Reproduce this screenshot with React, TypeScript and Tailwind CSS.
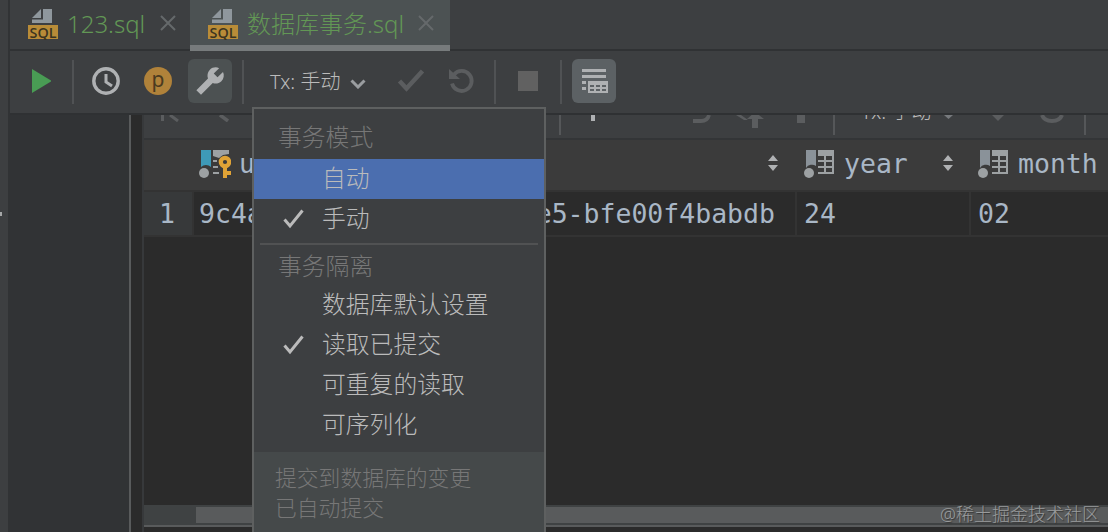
import React from 'react'

interface TabProps {
    name: string
    active?: boolean
}

interface MenuItemProps {
    label: string
    checked?: boolean
    selected?: boolean
}

interface ColumnProps {
    name: string
}

function SqlFileIcon() {
    return (
        <svg width="30" height="32" viewBox="0 0 30 32" className="shrink-0">
            <path d="M15 1h9v14H4v-3.500h11z" fill="#8f979d" />
            <path d="M4 10 13 1v9z" fill="#8f979d" />
            <rect y="17" width="30" height="14" fill="#b98c38" />
            <text
                x="15"
                y="29.500"
                textAnchor="middle"
                textLength="27"
                lengthAdjust="spacingAndGlyphs"
                fontFamily="Open Sans"
                fontWeight="600"
                fontSize="15"
                fill="#3d3420"
            >
                SQL
            </text>
        </svg>
    )
}

function CloseIcon() {
    return (
        <svg width="16" height="16" viewBox="0 0 16 16" className="shrink-0">
            <path d="M1 1l14 14M15 1L1 15" stroke="#65696b" strokeWidth="2" />
        </svg>
    )
}

function Tab({ name, active }: TabProps) {
    return (
        <div
            className={
                active
                    ? 'flex h-[51px] w-[260px] items-start border-b-[6px] border-[#777b7c] bg-[#4c5253] pl-[18px] pt-2'
                    : 'flex h-[49px] w-[180px] items-start pl-[18px] pt-2'
            }
        >
            <SqlFileIcon />
            <span
                className={
                    active
                        ? 'ml-[9px] w-[158px] whitespace-nowrap text-[24px] leading-8 text-[#629755]'
                        : 'ml-[9px] w-[78px] whitespace-nowrap text-[24px] leading-8 text-[#629755]'
                }
            >
                {name}
            </span>
            <div className={active ? 'ml-[13px] pt-[7px]' : 'ml-[15px] pt-[7px]'}>
                <CloseIcon />
            </div>
        </div>
    )
}

function CheckIcon({ color }: { color: string }) {
    return (
        <svg width="22" height="20" viewBox="0 0 22 20" className="shrink-0">
            <path d="M1.500 10.500 7 17 19.500 1.500" fill="none" stroke={color} strokeWidth="3" />
        </svg>
    )
}

function Divider() {
    return <div className="h-11 w-0.5 shrink-0 bg-[#505254]" />
}

function MainToolbar() {
    return (
        <div className="flex h-[62px] items-center">
            <svg width="20" height="26" viewBox="0 0 20 26" className="ml-[21px] mb-0.5 shrink-0">
                <path d="M1 1 21 13 1 25z" fill="#499c54" />
            </svg>
            <div className="ml-[21px]">
                <Divider />
            </div>
            <svg width="28" height="28" viewBox="0 0 28 28" className="ml-[18px] mb-0.5 shrink-0">
                <circle cx="14" cy="14" r="12.200" fill="none" stroke="#afb1b3" strokeWidth="3.400" />
                <path d="M14 7v8l6 4" fill="none" stroke="#afb1b3" strokeWidth="3" />
            </svg>
            <div className="ml-6 mb-0.5 flex size-7 shrink-0 items-center justify-center rounded-full bg-[#b0823a] pb-1 text-[21px] font-normal leading-none text-[#4b3a1f]">
                p
            </div>
            <div className="ml-4 mb-0.5 flex size-11 shrink-0 items-center justify-center rounded-md bg-[#4c5152]">
                <svg width="30" height="30" viewBox="0 0 24 24">
                    <path
                        transform="translate(24 0) scale(-1 1)"
                        d="M22.900 19.300l-9.300-9.400c.9-2.300.4-5-1.500-6.900-2-2-5-2.400-7.400-1.300L9 6 6 9 1.600 4.700C.4 7.100.9 10.100 2.900 12.100c1.900 1.900 4.600 2.400 6.900 1.500l9.400 9.300z"
                        fill="#afb1b3"
                    />
                </svg>
            </div>
            <div className="ml-[10px]">
                <Divider />
            </div>
            <span className="ml-[26px] w-[72px] shrink-0 whitespace-nowrap text-[20px] leading-7 text-[#bbbbbb]">Tx: 手动</span>
            <svg width="16" height="10" viewBox="0 0 16 10" className="ml-2 mt-1 shrink-0">
                <path d="M1.500 1.500 8 8l6.500-6.500" fill="none" stroke="#9a9da0" strokeWidth="3" />
            </svg>
            <svg width="28" height="24" viewBox="0 0 28 24" className="ml-[31px] mb-1 shrink-0">
                <path d="M2.500 13l7 7.500L25.500 3" fill="none" stroke="#5b5d5f" strokeWidth="4.500" />
            </svg>
            <svg width="26" height="28" viewBox="0 0 26 28" className="ml-6 mb-0.5 shrink-0">
                <path d="M5 7.500a10 10 0 1 1-2 9" fill="none" stroke="#5b5d5f" strokeWidth="3.800" />
                <path d="M0 2v10h11z" fill="#5b5d5f" />
            </svg>
            <div className="ml-[19px]">
                <Divider />
            </div>
            <div className="ml-[22px] mb-0.5 size-5 shrink-0 bg-[#616161]" />
            <div className="ml-[22px]">
                <Divider />
            </div>
            <div className="ml-[10px] mb-0.5 flex size-11 shrink-0 items-center justify-center rounded-md bg-[#5c6164]">
                <svg width="28" height="28" viewBox="0 0 28 28">
                    <path d="M2 2h24v3H2zM2 8h24v3H2zM2 14h4v3H2zM2 20h4v3H2z" fill="#afb1b3" />
                    <path
                        fillRule="evenodd"
                        d="M8 14h20v12H8zM10 18v2h4v-2zm6 0v2h4v-2zm6 0v2h4v-2zM10 22v2h4v-2zm6 0v2h4v-2zm6 0v2h4v-2z"
                        fill="#afb1b3"
                    />
                </svg>
            </div>
        </div>
    )
}

function DataToolbar() {
    return (
        <div className="flex h-[25px] items-start overflow-hidden border-b-2 border-[#333537] bg-[#3d3f41]">
            <svg width="20" height="7" viewBox="0 0 20 7" className="ml-[17px] shrink-0">
                <path d="M1.500 0v6M9 0l8 6" fill="none" stroke="#5b5d5f" strokeWidth="3" />
            </svg>
            <svg width="12" height="7" viewBox="0 0 12 7" className="ml-[38px] shrink-0">
                <path d="M1 0l8 6" fill="none" stroke="#5b5d5f" strokeWidth="3.500" />
            </svg>
            <div className="ml-[328px] h-5 w-0.5 shrink-0 bg-[#555759]" />
            <div className="ml-[30px] h-[6px] w-1 shrink-0 bg-[#afb1b3]" />
            <svg width="20" height="9" viewBox="0 0 20 9" className="ml-[98px] shrink-0">
                <path d="M0 6h8c4 0 7-2 8-6" fill="none" stroke="#5b5d5f" strokeWidth="3.800" />
            </svg>
            <svg width="30" height="13" viewBox="0 0 30 13" className="ml-[23px] shrink-0">
                <path d="M0 0h5l7 5H8zM11 4l8-7 9 7h-6v9h-6V4z" fill="#5b5d5f" />
            </svg>
            <div className="ml-[31px] h-2 w-2 shrink-0 bg-[#5b5d5f]" />
            <div className="ml-[28px] h-5 w-0.5 shrink-0 bg-[#555759]" />
            <span className="-mt-[17px] ml-[26px] w-[72px] shrink-0 whitespace-nowrap text-[20px] leading-7 text-[#bbbbbb]">Tx: 手动</span>
            <svg width="10" height="4" viewBox="0 0 10 4" className="ml-[11px] shrink-0">
                <path d="M0 0h9L4.500 4z" fill="#777a7d" />
            </svg>
            <svg width="12" height="6" viewBox="0 0 12 6" className="ml-[38px] shrink-0">
                <path d="M0 0h12L6 6z" fill="#5b5d5f" />
            </svg>
            <svg width="24" height="9" viewBox="0 0 24 9" className="ml-[36px] shrink-0">
                <path d="M2 0c3 8 17 8 20 0" fill="none" stroke="#5b5d5f" strokeWidth="4" />
            </svg>
            <div className="ml-[20px] h-5 w-0.5 shrink-0 bg-[#555759]" />
        </div>
    )
}

function ColumnIcon() {
    return (
        <svg width="30" height="30" viewBox="0 0 30 30" className="shrink-0">
            <path d="M2 1h10v16a7 7 0 0 0-10 2z" fill="#8a9299" />
            <path
                fillRule="evenodd"
                d="M14 1h16v24H14v-2h6v-4h-6v-2h6v-4h-6v-2h6V7h-6zM22 7v4h6V7zm0 6v4h6v-4zm0 6v4h6v-4z"
                fill="#9da1a3"
            />
            <circle cx="5" cy="24" r="5" fill="#9da1a3" />
        </svg>
    )
}

function KeyColumnIcon() {
    return (
        <svg width="32" height="30" viewBox="0 0 32 30" className="shrink-0">
            <path d="M2 1h10v17a7 7 0 0 0-10 0z" fill="#3e9ab8" />
            <path d="M14 1h16v4l-6 1-4 3-6-2zM14 11h4v2h-4zM14 17h5v2h-5zM14 23h6v2h-6z" fill="#9da1a3" />
            <circle cx="5" cy="24" r="5" fill="#9da1a3" />
            <circle cx="26" cy="13" r="4.200" fill="none" stroke="#e0a336" strokeWidth="4.200" />
            <path d="M24 17h4v5h4v4h-4v3h-4z" fill="#e0a336" />
        </svg>
    )
}

function SortIcon() {
    return (
        <svg width="10" height="16" viewBox="0 0 10 16" className="shrink-0">
            <path d="M0 6l5-6 5 6zM0 10h10l-5 6z" fill="#afb1b3" />
        </svg>
    )
}

function ColumnHeader({ name }: ColumnProps) {
    return (
        <div className="flex h-full w-[174px] shrink-0 items-center pb-0.5 pl-[7px] pr-[18px]">
            <ColumnIcon />
            <span className="ml-[10px] grow">{name}</span>
            <div className="pb-0.5">
                <SortIcon />
            </div>
        </div>
    )
}

function DataGrid() {
    return (
        <div className="flex min-w-0 grow flex-col border-l-2 border-[#37393b] font-['DejaVu_Sans_Mono',monospace] text-[26.5px] text-[#a9b7c6]">
            <div className="font-['Noto_Sans','Noto_Sans_CJK_SC',sans-serif] font-light">
                <DataToolbar />
            </div>
            <div className="flex h-[50px] shrink-0 overflow-hidden bg-[#3b3b3b]">
                <div className="flex w-[653px] shrink-0 items-center pb-0.5 pl-[55px] pr-[19px]">
                    <KeyColumnIcon />
                    <span className="ml-2 grow">u</span>
                    <div className="pb-0.5">
                        <SortIcon />
                    </div>
                </div>
                <ColumnHeader name="year" />
                <ColumnHeader name="month" />
            </div>
            <div className="flex h-[47px] shrink-0 overflow-hidden border-y-2 border-[#333333] leading-[43px]">
                <div className="w-[50px] shrink-0 border-r-2 border-[#333333] bg-[#37393a] pr-0.5 text-center">1</div>
                <div className="flex w-[603px] shrink-0 justify-between border-r-2 border-[#333333] pl-[5px] pr-[20px]">
                    <span>9c4a</span>
                    <span>e5-bfe00f4babdb</span>
                </div>
                <div className="w-[174px] shrink-0 border-r-2 border-[#333333] pl-[7px]">24</div>
                <div className="pl-[7px]">02</div>
            </div>
            <div className="grow" />
            <div className="h-[22px] shrink-0 border-b-2 border-[#595b5c] bg-[#3f4243] pl-[52px] pt-0.5">
                <div className="h-4 bg-[#595b5c]" />
            </div>
            <div className="h-[5px] shrink-0" />
        </div>
    )
}

function MenuItem({ label, checked, selected }: MenuItemProps) {
    return (
        <div className={selected ? 'flex h-10 items-center bg-[#4b6eaf] pl-[29px] text-[#bbbbbb]' : 'flex h-10 items-center pl-[29px] text-[#bbbbbb]'}>
            <div className="w-[39px]">{checked && <CheckIcon color="#bbbbbb" />}</div>
            <span>{label}</span>
        </div>
    )
}

function TransactionMenu() {
    return (
        <div className="absolute left-[252px] top-[107px] flex h-[427px] w-[294px] flex-col border-2 border-[#5e6060] bg-[#3d3f41] text-[23.8px]">
            <div className="h-[50px] pl-6 pt-2 leading-10 text-[#777777]">事务模式</div>
            <MenuItem label="自动" selected />
            <MenuItem label="手动" checked />
            <div className="mx-1.5 mt-1 h-0.5 bg-[#515253]" />
            <div className="h-10 pl-6 leading-[42px] text-[#777777]">事务隔离</div>
            <MenuItem label="数据库默认设置" />
            <MenuItem label="读取已提交" checked />
            <MenuItem label="可重复的读取" />
            <MenuItem label="可序列化" />
            <div className="mt-[7px] grow bg-[#45494a] pl-[21px] pt-[11px] text-[21.8px] leading-[30px] text-[#777777]">
                提交到数据库的变更
                <br />
                已自动提交
            </div>
        </div>
    )
}

export default function App() {
    return (
        <div className="relative flex h-[532px] w-[1108px] overflow-hidden bg-[#3d3f41] font-['Noto_Sans','Noto_Sans_CJK_SC',sans-serif] font-light">
            <div className="flex w-2 shrink-0 items-center">
                <div className="mb-[104px] h-1 w-0.5 bg-[#a5a7a8]" />
            </div>
            <div className="flex min-w-0 grow flex-col border-l-2 border-[#313335]">
                <div className="flex h-[51px] shrink-0 border-b-2 border-[#303234]">
                    <Tab name="123.sql" />
                    <Tab name="数据库事务.sql" active />
                </div>
                <MainToolbar />
                <div className="flex grow border-t-2 border-[#2f3133] bg-[#2b2b2b]">
                    <div className="w-[121px] shrink-0 border-r-2 border-[#595b5c] bg-[#313335]" />
                    <div className="w-[11px] shrink-0" />
                    <DataGrid />
                </div>
            </div>
            <TransactionMenu />
            <span className="absolute left-[940px] top-[502px] whitespace-nowrap text-[18px] leading-6 text-[#999b9c] [text-shadow:1px_1px_1px_#333333]">
                @稀土掘金技术社区
            </span>
        </div>
    )
}
